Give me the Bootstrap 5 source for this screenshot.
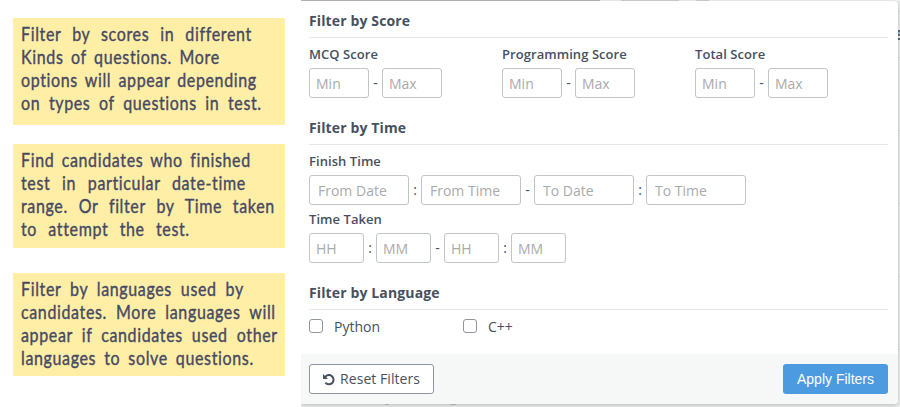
<!DOCTYPE html>
<html lang="en">
<head>
<meta charset="utf-8">
<title>Candidate filters</title>
<link rel="stylesheet" href="https://cdn.jsdelivr.net/npm/bootstrap@5.3.0/dist/css/bootstrap.min.css">
<style>
body{width:900px;height:407px;overflow:hidden;background:#fff;color:#465160;font:15px/20px "Open Sans","Noto Sans",sans-serif}
.notes{width:301px;padding:18px 0 0 13px}
.note{width:272px;background:#ffeea5;color:#464964;padding:4px 0 0 8px;font:20px/23px Lato,sans-serif;letter-spacing:.8px;-webkit-text-stroke:.4px #464964}
.note-a{height:107px}.note-b{height:104px;margin-top:19px}.note-c{height:103px;margin-top:25px}
.note span{display:block;width:calc(var(--w)*1.25px + 1px);white-space:nowrap;text-align-last:justify;height:23px;transform:scaleX(.8);transform-origin:0 0}
.backdrop{width:599px;background:linear-gradient(90deg,#b8bdc0 0 299px,#f2f3f3 299px 320px,#d0d4d4 320px 378px,#f2f3f3 378px 395px,#d0d4d4 395px 408px,#f2f3f3 408px) 0 0/100% 1px no-repeat,#ebecec;padding-top:1px;position:relative;overflow:hidden}
.panel{position:relative;z-index:1;width:597px;height:403px;background:#fff;border-radius:0 4px 4px 0;box-shadow:0 1px 4px rgba(0,0,0,.22);overflow:hidden}
.panel-main{height:353px;padding:0 10px 0 8px}
.title{height:37px;padding-top:10px;font-size:14px;font-weight:700;line-height:20px;letter-spacing:.13px;border-bottom:1px solid #e6e7e8;white-space:nowrap}
.title-next{margin-top:10px}
.caption{font-size:13px;font-weight:600;height:30px;padding-top:6px;line-height:20px;letter-spacing:.06px;white-space:nowrap}
.caption-tight{height:28px;padding-top:4px}
.score{width:193px}
.box{height:30px;border:1px solid #c0c5c8;border-radius:3px;padding:0 6px;font-size:14px;line-height:28px;color:#465160;background:#fff;display:block}
.box::placeholder{color:#aaa;opacity:1}
.w60{width:60px}.w55{width:55px}.w100{width:100px;padding:0 8px}
.sep{width:13px;text-align:center;font-size:14px;line-height:30px}
.sep-c{width:12px}
.tick{width:14px;height:14px;margin:0;border:1px solid #90979f;border-radius:3px;appearance:none;background:#fff}
.langs{padding-top:5px}
.lang{width:154px;gap:11px;font-size:14px}
.lang span{padding-top:2px}
.panel-foot{height:50px;background:#f6f8f8;padding:0 10px 0 8px}
.reset,.apply{height:30px;border-radius:3px;padding:0;line-height:28px;font-size:14px;white-space:nowrap}
.reset{width:125px;border:1px solid #8d959e;background:#fff;color:#465160;gap:5px;letter-spacing:.05px}
.apply{width:105px;border:0;background:#4c9be0;color:#fff;font-family:"Liberation Sans",sans-serif}
.peek{position:absolute;background:#a9b0b6;height:1px;top:404px;z-index:2}
.peek-y{left:84px;width:4px}.peek-g{left:149px;width:6px}
.edge{position:absolute;left:597px;top:30px;width:2px;height:10px;background:linear-gradient(#5b6b7b 0 2px,#8fb4d4 2px 4px,#6b7582 4px 6px,#ebecec 6px 8px,#5b6b7b 8px)}
.rule{position:absolute;left:597px;width:2px;height:1px;background:#d9dbdc}
.r1{top:11px}.r2{top:57px}.r3{top:130px}.r4{top:203px}.r5{top:276px}.r6{top:349px}
</style>
<script src="https://cdn.jsdelivr.net/npm/bootstrap@5.3.0/dist/js/bootstrap.bundle.min.js"></script>
</head>
<body class="d-flex">
<aside class="notes flex-shrink-0">
<div class="note note-a"><span style="--w:230">Filter by scores in different</span><span style="--w:198">Kinds of questions. More</span><span style="--w:235">options will appear depending</span><span style="--w:240">on types of questions in test.</span></div>
<div class="note note-b"><span style="--w:229">Find candidates who finished</span><span style="--w:224">test in particular date-time</span><span style="--w:253">range. Or filter by Time taken</span><span style="--w:168">to attempt the test.</span></div>
<div class="note note-c"><span style="--w:222">Filter by languages used by</span><span style="--w:254">candidates. More languages will</span><span style="--w:256">appear if candidates used other</span><span style="--w:232">languages to solve questions.</span></div>
</aside>
<main class="backdrop flex-shrink-0">
<i class="peek peek-y"></i><i class="peek peek-g"></i><i class="edge"></i>
<i class="rule r1"></i><i class="rule r2"></i><i class="rule r3"></i><i class="rule r4"></i><i class="rule r5"></i><i class="rule r6"></i>
<form class="panel">
<div class="panel-main">
<div class="title">Filter by Score</div>
<div class="d-flex">
<div class="score"><div class="caption">MCQ Score</div><div class="d-flex"><input class="box w60" placeholder="Min"><span class="sep">-</span><input class="box w60" placeholder="Max"></div></div>
<div class="score"><div class="caption">Programming Score</div><div class="d-flex"><input class="box w60" placeholder="Min"><span class="sep">-</span><input class="box w60" placeholder="Max"></div></div>
<div class="score"><div class="caption">Total Score</div><div class="d-flex"><input class="box w60" placeholder="Min"><span class="sep">-</span><input class="box w60" placeholder="Max"></div></div>
</div>
<div class="title title-next">Filter by Time</div>
<div class="caption">Finish Time</div>
<div class="d-flex"><input class="box w100" placeholder="From Date"><span class="sep sep-c">:</span><input class="box w100" placeholder="From Time"><span class="sep">-</span><input class="box w100" placeholder="To Date"><span class="sep sep-c">:</span><input class="box w100" placeholder="To Time"></div>
<div class="caption caption-tight">Time Taken</div>
<div class="d-flex"><input class="box w55" placeholder="HH"><span class="sep sep-c">:</span><input class="box w55" placeholder="MM"><span class="sep">-</span><input class="box w55" placeholder="HH"><span class="sep sep-c">:</span><input class="box w55" placeholder="MM"></div>
<div class="title title-next">Filter by Language</div>
<div class="d-flex langs"><label class="lang d-flex align-items-center"><input type="checkbox" class="tick"><span>Python</span></label><label class="lang d-flex align-items-center"><input type="checkbox" class="tick"><span>C++</span></label></div>
</div>
<div class="panel-foot d-flex justify-content-between align-items-center">
<button type="button" class="btn reset d-flex align-items-center justify-content-center"><svg width="12" height="13" viewBox="0 0 12 13" fill="none"><path d="M2.2 4A4.6 4.6 0 1 1 2.4 9.6" stroke="#465160" stroke-width="2"/><path d="M0 1v5h5z" fill="#465160"/></svg>Reset Filters</button>
<button type="button" class="btn apply">Apply Filters</button>
</div>
</form>
</main>
</body>
</html>
